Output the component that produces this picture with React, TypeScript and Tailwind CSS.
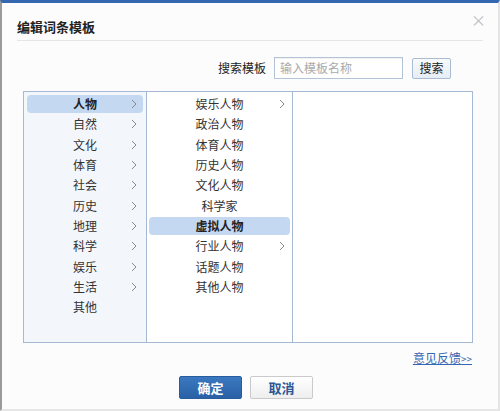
import type { ReactNode } from 'react'

const FONT = { fontFamily: '"Noto Sans CJK SC", "Liberation Sans", sans-serif' }

const categories = ['人物', '自然', '文化', '体育', '社会', '历史', '地理', '科学', '娱乐', '生活', '其他']
const subCategories = [
  { name: '娱乐人物', more: true },
  { name: '政治人物', more: false },
  { name: '体育人物', more: false },
  { name: '历史人物', more: false },
  { name: '文化人物', more: false },
  { name: '科学家', more: false },
  { name: '虚拟人物', more: false },
  { name: '行业人物', more: true },
  { name: '话题人物', more: false },
  { name: '其他人物', more: false },
]

function Chevron() {
  return (
    <svg width="6" height="10" viewBox="0 0 6 10" className="absolute top-1/2 -translate-y-1/2" style={{ right: 0 }}>
      <polyline points="1,1 5,5 1,9" fill="none" stroke="#8a8a8a" strokeWidth="1" />
    </svg>
  )
}

function Row({
  label,
  selected,
  more,
  inset,
  chevronRight,
}: {
  label: ReactNode
  selected: boolean
  more: boolean
  inset: string
  chevronRight: string
}) {
  return (
    <div className={`h-[20.33px] py-px ${inset}`}>
      <div
        className={`relative h-full rounded-[4px] flex items-center justify-center text-[12px] leading-none ${
          selected ? 'bg-[#c5d8f1] font-bold text-[#222]' : 'text-[#333]'
        }`}
      >
        <span>{label}</span>
        {more && (
          <span className={`absolute top-0 bottom-0 ${chevronRight} w-[6px]`}>
            <Chevron />
          </span>
        )}
      </div>
    </div>
  )
}

export default function App() {
  return (
    <div
      className="relative w-[500px] h-[411px] bg-[#fcfcfc] border-t-[3px] border-t-[#3468b0] border-l-2 border-l-[#9a9a9a] border-r-2 border-r-[#e4e4e4] border-b-2 border-b-[#e6e6e6] flex flex-col"
      style={FONT}
    >
      <span className="absolute right-[12px] top-[9px] text-[15px] leading-none text-[#bdbdbd]">×</span>

      <div className="px-[15px] pt-[16px]">
        <h1 className="text-[13px] leading-[16px] font-bold text-[#222]">编辑词条模板</h1>
        <div className="mt-[5px] h-px bg-[#e6e6e6]" />
      </div>

      <div className="mt-[16px] pr-[47px] flex items-center justify-end">
        <span className="text-[12px] text-[#222]">搜索模板</span>
        <div className="ml-[8px] w-[129px] h-[22px] border border-[#b3c4d8] bg-white shadow-[inset_0_1px_1px_rgba(0,0,0,0.06)] flex items-center px-[5px] text-[12px] text-[#aaaaaa]">
          输入模板名称
        </div>
        <button className="ml-[9px] w-[39px] h-[21px] border border-[#a9bcd2] rounded-[2px] bg-gradient-to-b from-[#f8fafc] to-[#e6edf4] text-[12px] text-[#222] flex items-center justify-center">
          搜索
        </button>
      </div>

      <div className="mt-[12px] ml-[21px] w-[450px] h-[252px] border border-[#a4b9d4] flex">
        <div className="w-[123px] bg-[#f3f7fc] border-r border-r-[#a4b9d4] pt-[2px]">
          {categories.map((c, i) => (
            <Row key={c} label={c} selected={i === 0} more={i < 10} inset="px-[3px]" chevronRight="right-[6px]" />
          ))}
        </div>
        <div className="w-[146px] bg-white border-r border-r-[#a4b9d4] pt-[2px]">
          {subCategories.map((s, i) => (
            <Row key={s.name} label={s.name} selected={i === 6} more={s.more} inset="px-[2px]" chevronRight="right-[5px]" />
          ))}
        </div>
        <div className="flex-1 bg-white" />
      </div>

      <div className="mt-[7px] pr-[26px] flex justify-end">
        <a className="text-[12px] leading-[16px] text-[#3566b3] underline">
          意见反馈<span className="text-[10px]">&gt;&gt;</span>
        </a>
      </div>

      <div className="mt-[9px] pl-[177px] flex gap-[8px]">
        <button className="w-[63px] h-[23px] rounded-[2px] bg-gradient-to-b from-[#3b78bf] to-[#2a61a6] border border-[#275c9e] text-white text-[13px] font-bold flex items-center justify-center">
          确定
        </button>
        <button className="w-[63px] h-[23px] rounded-[2px] bg-gradient-to-b from-white to-[#eeeeee] border border-[#cacaca] text-[#2b5797] text-[13px] font-bold flex items-center justify-center">
          取消
        </button>
      </div>
    </div>
  )
}
